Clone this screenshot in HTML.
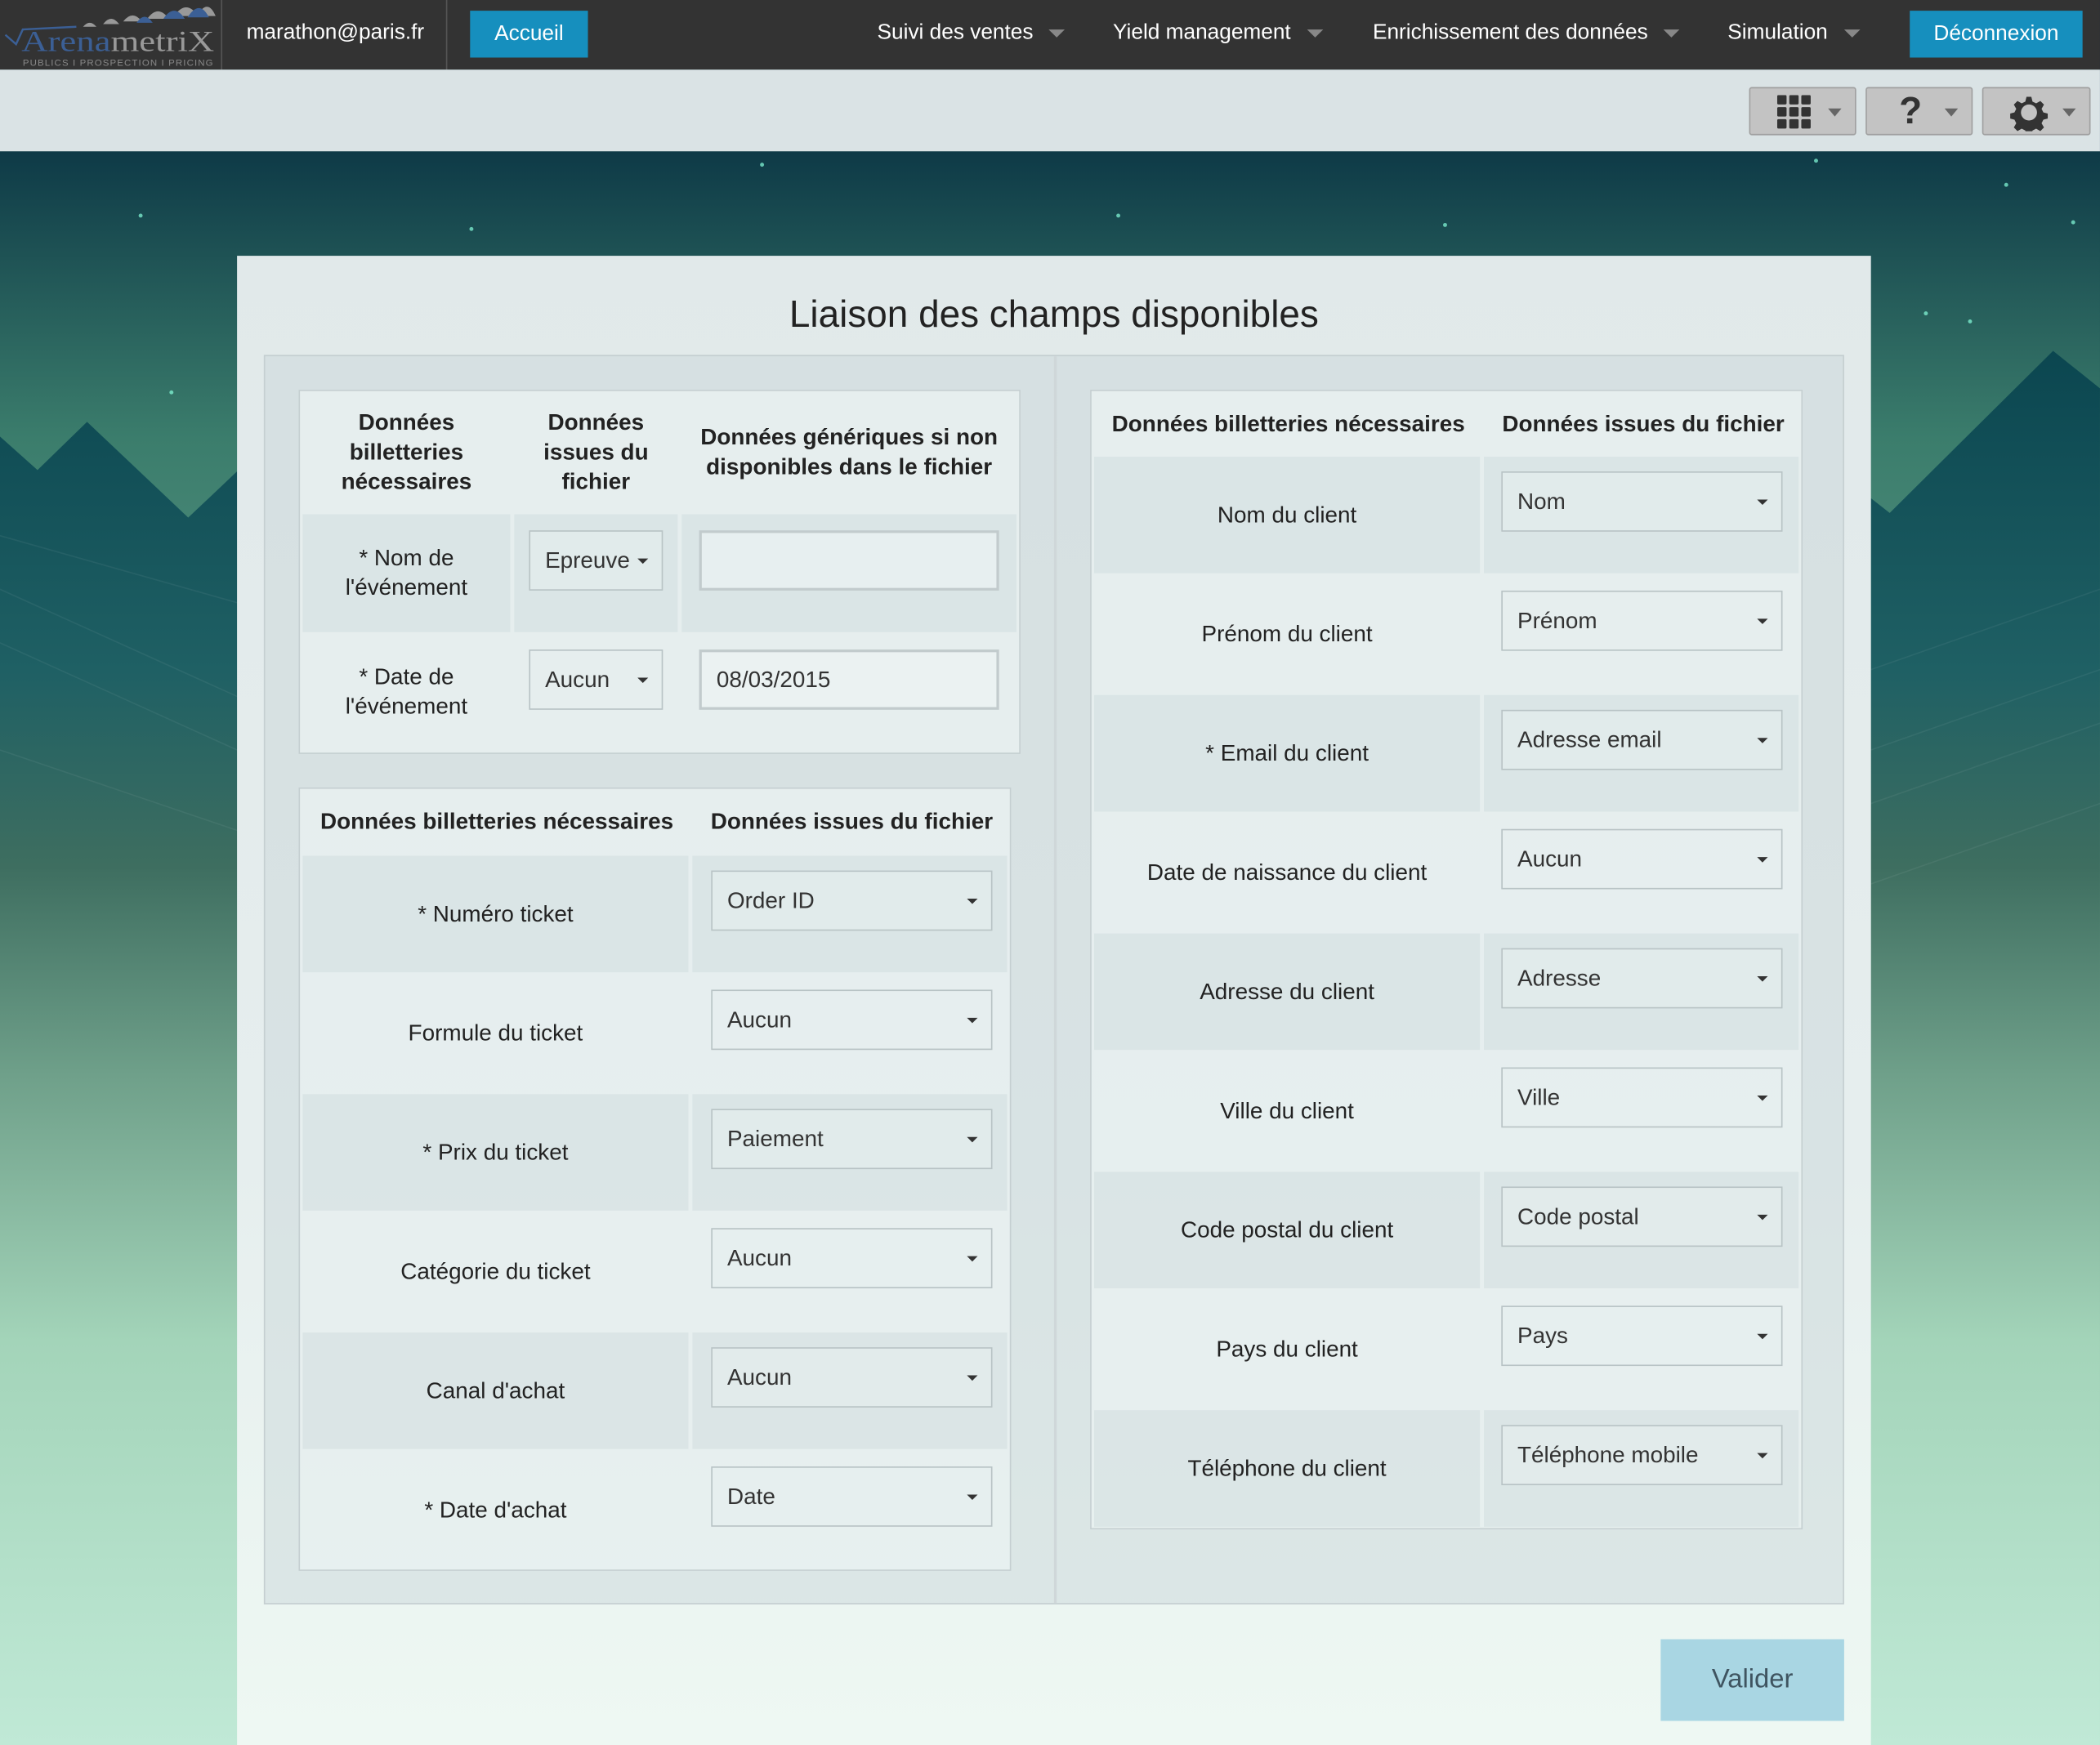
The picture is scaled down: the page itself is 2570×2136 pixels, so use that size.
<!DOCTYPE html>
<html><head><meta charset="utf-8">
<style>
*{box-sizing:border-box;margin:0;padding:0}
html,body{width:2570px;height:2136px;overflow:hidden;background:#1c4a50}
#w{position:absolute;left:0;top:0;width:1568px;height:1303px;transform:scale(1.6390,1.6393);transform-origin:0 0;font-family:"Liberation Sans",sans-serif;color:#222;overflow:hidden}
.bg{position:absolute;left:0;top:0;width:1568px;height:1303px}
.nav{position:absolute;left:0;top:0;width:1568px;height:52px;background:#333}
.nav .t{position:absolute;color:#fff;font-size:16px;top:16px}
.car{position:absolute;top:22px;width:0;height:0;border-left:6px solid transparent;border-right:6px solid transparent;border-top:6px solid #888}
.btn{position:absolute;top:8px;height:35px;background:#168fbe;color:#fff;font-size:16px;text-align:center;line-height:35px}
.sub{position:absolute;left:0;top:52px;width:1568px;height:61px;background:#dae3e5}
.tb{position:absolute;top:13px;height:36px;background:#c3c3c3;border:1px solid #a0a0a0;border-radius:2px}
.tb .c{position:absolute;right:10px;top:15px;border-left:5px solid transparent;border-right:5px solid transparent;border-top:6px solid #666}
.panel{position:absolute;left:177px;top:191px;width:1220px;height:1112px;background:linear-gradient(#e1e9ea,#e6eeee 60%,#eef8f3)}
h1{position:absolute;left:0;width:1220px;top:28px;text-align:center;font-weight:normal;font-size:28px;color:#222}
.outer{position:absolute;left:20px;top:74px;width:1180px;height:933px;background:rgba(200,212,214,.45);border:1px solid #c5cfd1}
.div{position:absolute;left:589px;top:0;width:2px;height:931px;background:#cfd7d9}
.tbl{position:absolute;background:rgba(236,243,243,.7);border:1px solid #c5cfd1}
.cell{position:absolute;display:flex;align-items:center;justify-content:center;text-align:center;font-size:17px;line-height:22px}
.h{font-weight:bold}
.dk{background:rgba(205,217,219,.45)}
.sel{position:absolute;height:45px;border:1px solid #b8c3c5;background:rgba(230,238,239,.6);font-size:17px;color:#333;padding-left:11px;line-height:43px}
.sel:after{content:"";position:absolute;right:10px;top:20px;border-left:4px solid transparent;border-right:4px solid transparent;border-top:4px solid #333}
.inp{position:absolute;height:45px;border:2px solid #c2cbcd;background:rgba(236,243,243,.7);font-size:17px;color:#333;padding-left:11px;line-height:41px}
.val{position:absolute;left:1063px;top:1033px;width:137px;height:61px;background:#a9d6e3;color:#3f5460;font-size:20px;text-align:center;line-height:61px}
</style></head><body><div id="w">
<svg class="bg" width="1568" height="1303" viewBox="0 0 1568 1303">
<defs><linearGradient id="g" gradientUnits="userSpaceOnUse" x1="0" y1="113" x2="0" y2="1303"><stop offset="0" stop-color="#0e3a47"/><stop offset=".18" stop-color="#3b7d6c"/><stop offset="1" stop-color="#c0e9d6"/></linearGradient>
<linearGradient id="m" gradientUnits="userSpaceOnUse" x1="0" y1="262" x2="0" y2="1303"><stop offset="0" stop-color="#0b4650"/><stop offset=".23" stop-color="#1f6064"/><stop offset=".37" stop-color="#3e6e60"/><stop offset=".52" stop-color="#6fa08a"/><stop offset=".71" stop-color="#a3d4b9"/><stop offset="1" stop-color="#c0e9d6"/></linearGradient></defs>
<rect width="1568" height="1303" fill="url(#g)"/>
<polygon points="0,326 28,351 65,315 177,421 177,1303 0,1303" fill="url(#m)"/>
<polygon points="140,387 177,352 177,1303 140,1303" fill="url(#m)"/>
<polygon points="1397,372 1411,383 1533,262 1568,290 1568,1303 1397,1303" fill="url(#m)"/>
<g stroke="#ffffff" stroke-opacity=".06" fill="none"><path d="M0 400 L177 450 M0 440 L177 520 M0 480 L177 560 M0 560 L177 620 M1397 500 L1568 440 M1397 560 L1568 500 M1397 600 L1568 540 M1397 660 L1568 600"/></g>
<g fill="#8fd" opacity=".7"><circle cx="105" cy="161" r="1.5"/><circle cx="352" cy="171" r="1.5"/><circle cx="569" cy="123" r="1.5"/><circle cx="1079" cy="168" r="1.5"/><circle cx="1356" cy="120" r="1.5"/><circle cx="1498" cy="138" r="1.5"/><circle cx="1471" cy="240" r="1.5"/><circle cx="1548" cy="166" r="1.5"/><circle cx="128" cy="293" r="1.5"/><circle cx="835" cy="161" r="1.5"/><circle cx="1438" cy="234" r="1.5"/></g>
</svg>
<div class="nav">
<svg style="position:absolute;left:2px;top:0" width="162" height="52"><g fill="#999"><path d="M60 20 q5-6 10 0z M75 18 q6-8 12 0z M90 16 q7-9 14 0z M108 14 q8-11 16 0z M128 12 q9-13 18 0z M145 12 q8-14 14 0z"/></g><g fill="#3b5f95"><path d="M100 17 q6-9 12 0z M120 14 q8-12 16 0z M138 13 q9-14 16 0z"/></g><path d="M2 26 L10 33 L15 22 L55 20" stroke="#3b5f95" stroke-width="1.5" fill="none"/><text x="14" y="38" font-family="Liberation Serif,serif" font-size="22" textLength="144" lengthAdjust="spacingAndGlyphs"><tspan fill="#3b5f95">Arena</tspan><tspan fill="#999">metriX</tspan></text><text x="15" y="49" font-size="7" fill="#888" font-family="Liberation Sans,sans-serif" textLength="142">PUBLICS I PROSPECTION I PRICING</text></svg>
<div style="position:absolute;left:165px;top:0;width:1px;height:52px;background:#555"></div>
<div style="position:absolute;left:333px;top:0;width:1px;height:52px;background:#555"></div>
<div class="t" style="left:184px">marathon@paris.fr</div>
<div class="btn" style="left:351px;width:88px">Accueil</div>
<div class="t" style="left:655px">Suivi des ventes</div><div class="car" style="left:783px"></div>
<div class="t" style="left:831px">Yield management</div><div class="car" style="left:976px"></div>
<div class="t" style="left:1025px">Enrichissement des données</div><div class="car" style="left:1242px"></div>
<div class="t" style="left:1290px">Simulation</div><div class="car" style="left:1377px"></div>
<div class="btn" style="left:1426px;width:129px">Déconnexion</div>
</div>
<div class="sub">
<div class="tb" style="left:1306px;width:80px"><svg style="position:absolute;left:20px;top:5px" width="26" height="26"><g fill="#333"><rect x="0" y="0" width="7" height="7" rx="1"/><rect x="9" y="0" width="7" height="7" rx="1"/><rect x="18" y="0" width="7" height="7" rx="1"/><rect x="0" y="9" width="7" height="7" rx="1"/><rect x="9" y="9" width="7" height="7" rx="1"/><rect x="18" y="9" width="7" height="7" rx="1"/><rect x="0" y="18" width="7" height="7" rx="1"/><rect x="9" y="18" width="7" height="7" rx="1"/><rect x="18" y="18" width="7" height="7" rx="1"/></g></svg><div class="c"></div></div>
<div class="tb" style="left:1393px;width:80px"><div style="position:absolute;left:24px;top:0;font-size:28px;font-weight:bold;color:#333;line-height:34px">?</div><div class="c"></div></div>
<div class="tb" style="left:1480px;width:81px"><svg style="position:absolute;left:20px;top:4px" width="28" height="28" viewBox="0 0 28 28"><path d="M12 1h4l1 4 3 1.5 3.5-2 3 3-2 3.5 1.5 3 4 1v4l-4 1-1.5 3 2 3.5-3 3-3.5-2-3 1.5-1 4h-4l-1-4-3-1.5-3.5 2-3-3 2-3.5-1.5-3-4-1v-4l4-1 1.5-3-2-3.5 3-3 3.5 2 3-1.5z" fill="#333" transform="scale(.9) translate(1.5 1.5)"/><circle cx="14" cy="14" r="6" fill="#c3c3c3"/></svg><div class="c"></div></div>
</div>
<div class="panel">
<h1>Liaison des champs disponibles</h1>
<div class="outer"><div class="div"></div>
<div class="tbl" style="left:25px;top:25px;width:539px;height:272px">
<div class="cell h" style="left:2px;top:0;width:155px;height:92px">Données<br>billetteries<br>nécessaires</div>
<div class="cell h" style="left:160px;top:0;width:122px;height:92px">Données<br>issues du<br>fichier</div>
<div class="cell h" style="left:285px;top:0;width:250px;height:92px">Données génériques si non<br>disponibles dans le fichier</div>
<div class="cell dk" style="left:2px;top:92px;width:155px;height:88px">* Nom de<br>l'événement</div>
<div class="cell dk" style="left:160px;top:92px;width:122px;height:88px"></div>
<div class="cell dk" style="left:285px;top:92px;width:250px;height:88px"></div>
<div class="cell" style="left:2px;top:180px;width:155px;height:89px">* Date de<br>l'événement</div>
<div class="sel" style="left:171px;top:104px;width:100px">Epreuve</div>
<div class="inp" style="left:298px;top:104px;width:224px"></div>
<div class="sel" style="left:171px;top:193px;width:100px">Aucun</div>
<div class="inp" style="left:298px;top:193px;width:224px">08/03/2015</div>
</div>
<div class="tbl" style="left:25px;top:322px;width:532px;height:585px">
<div class="cell h" style="left:2px;top:0;width:290px;height:50px">Données billetteries nécessaires</div>
<div class="cell h" style="left:295px;top:0;width:234px;height:50px">Données issues du fichier</div>
<div class="cell dk" style="left:2px;top:50px;width:288px;height:87px">* Numéro ticket</div><div class="cell dk" style="left:293px;top:50px;width:235px;height:87px"></div>
<div class="cell" style="left:2px;top:139px;width:288px;height:87px">Formule du ticket</div>
<div class="cell dk" style="left:2px;top:228px;width:288px;height:87px">* Prix du ticket</div><div class="cell dk" style="left:293px;top:228px;width:235px;height:87px"></div>
<div class="cell" style="left:2px;top:317px;width:288px;height:87px">Catégorie du ticket</div>
<div class="cell dk" style="left:2px;top:406px;width:288px;height:87px">Canal d'achat</div><div class="cell dk" style="left:293px;top:406px;width:235px;height:87px"></div>
<div class="cell" style="left:2px;top:495px;width:288px;height:87px">* Date d'achat</div>
<div class="sel" style="left:307px;top:61px;width:210px">Order ID</div>
<div class="sel" style="left:307px;top:150px;width:210px">Aucun</div>
<div class="sel" style="left:307px;top:239px;width:210px">Paiement</div>
<div class="sel" style="left:307px;top:328px;width:210px">Aucun</div>
<div class="sel" style="left:307px;top:417px;width:210px">Aucun</div>
<div class="sel" style="left:307px;top:506px;width:210px">Date</div>
</div>
<div class="tbl" style="left:616px;top:25px;width:532px;height:851px">
<div class="cell h" style="left:2px;top:0;width:290px;height:49px">Données billetteries nécessaires</div>
<div class="cell h" style="left:295px;top:0;width:234px;height:49px">Données issues du fichier</div>
<div class="cell dk" style="left:2px;top:49px;width:288px;height:87px">Nom du client</div><div class="cell dk" style="left:293px;top:49px;width:235px;height:87px"></div>
<div class="cell" style="left:2px;top:138px;width:288px;height:87px">Prénom du client</div>
<div class="cell dk" style="left:2px;top:227px;width:288px;height:87px">* Email du client</div><div class="cell dk" style="left:293px;top:227px;width:235px;height:87px"></div>
<div class="cell" style="left:2px;top:316px;width:288px;height:87px">Date de naissance du client</div>
<div class="cell dk" style="left:2px;top:405px;width:288px;height:87px">Adresse du client</div><div class="cell dk" style="left:293px;top:405px;width:235px;height:87px"></div>
<div class="cell" style="left:2px;top:494px;width:288px;height:87px">Ville du client</div>
<div class="cell dk" style="left:2px;top:583px;width:288px;height:87px">Code postal du client</div><div class="cell dk" style="left:293px;top:583px;width:235px;height:87px"></div>
<div class="cell" style="left:2px;top:672px;width:288px;height:87px">Pays du client</div>
<div class="cell dk" style="left:2px;top:761px;width:288px;height:87px">Téléphone du client</div><div class="cell dk" style="left:293px;top:761px;width:235px;height:87px"></div>
<div class="sel" style="left:306px;top:60px;width:210px">Nom</div>
<div class="sel" style="left:306px;top:149px;width:210px">Prénom</div>
<div class="sel" style="left:306px;top:238px;width:210px">Adresse email</div>
<div class="sel" style="left:306px;top:327px;width:210px">Aucun</div>
<div class="sel" style="left:306px;top:416px;width:210px">Adresse</div>
<div class="sel" style="left:306px;top:505px;width:210px">Ville</div>
<div class="sel" style="left:306px;top:594px;width:210px">Code postal</div>
<div class="sel" style="left:306px;top:683px;width:210px">Pays</div>
<div class="sel" style="left:306px;top:772px;width:210px">Téléphone mobile</div>
</div>
</div>
<div class="val">Valider</div>
</div>
</div></body></html>
